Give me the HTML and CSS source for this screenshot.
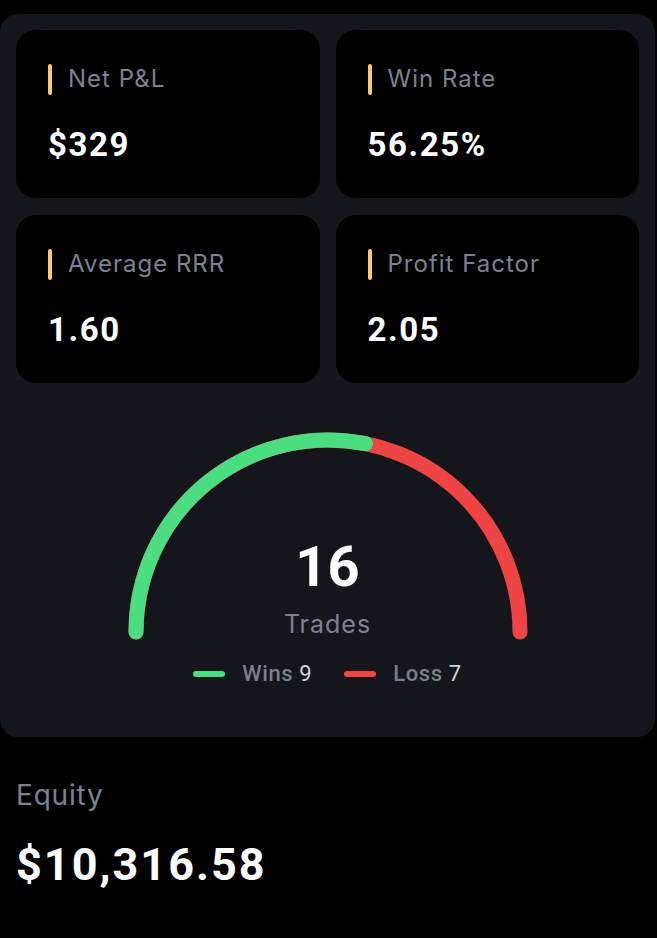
FILE: index.html
```html
<!DOCTYPE html>
<html lang="en">
<head>
    <meta charset="UTF-8">
    <meta name="viewport" content="width=device-width, initial-scale=1.0">
    <title>Trading Stats</title>
    <link rel="stylesheet" href="styles.css">
</head>
<body>
    <section class="panel">
        <div class="stats">
            <div class="stat-card">
                <div class="stat-label">Net P&amp;L</div>
                <div class="stat-value">$329</div>
            </div>
            <div class="stat-card">
                <div class="stat-label">Win Rate</div>
                <div class="stat-value">56.25%</div>
            </div>
            <div class="stat-card">
                <div class="stat-label">Average RRR</div>
                <div class="stat-value">1.60</div>
            </div>
            <div class="stat-card">
                <div class="stat-label">Profit Factor</div>
                <div class="stat-value">2.05</div>
            </div>
        </div>

        <div class="gauge">
            <svg class="gauge-arc" width="400" height="210" viewBox="0 0 400 210">
                <!-- loss arc first, wins drawn on top -->
                <path d="M 8 200 A 192 192 0 0 1 392 200" fill="none" stroke="#ef4444" stroke-width="15" stroke-linecap="round"/>
                <path d="M 8 200 A 192 192 0 0 1 237.5 11.7" fill="none" stroke="#4ade80" stroke-width="15" stroke-linecap="round"/>
            </svg>
            <div class="gauge-center">
                <div class="gauge-total">16</div>
                <div class="gauge-caption">Trades</div>
            </div>
        </div>

        <div class="legend">
            <span class="legend-item"><span class="legend-line win"></span>Wins <b>9</b></span>
            <span class="legend-item"><span class="legend-line loss"></span>Loss <b>7</b></span>
        </div>
    </section>

    <section class="equity">
        <div class="equity-label">Equity</div>
        <div class="equity-value">$10,316.58</div>
    </section>
</body>
</html>
```

FILE: styles.css
```css
body {
    margin: 0;
    background: #000;
    color: #fff;
    font-family: Inter, Lato, "Liberation Sans", sans-serif;
}
.panel {
    margin: 14px 2px 0 0;
    padding: 16px 16px 0;
    height: 723px;
    box-sizing: border-box;
    background: #15161b;
    border-radius: 18px;
}
.stats {
    display: grid;
    grid-template-columns: 1fr 1fr;
    gap: 17px 16px;
}
.stat-card {
    background: #000;
    border-radius: 20px;
    padding: 33px 20px 33px 32px;
}
.stat-label {
    display: flex;
    align-items: center;
    gap: 16px;
    font-size: 24px;
    line-height: 32px;
    letter-spacing: 1px;
    color: #7d8293;
}
.stat-label::before {
    content: "";
    width: 4px;
    height: 31px;
    border-radius: 2px;
    background: #fcc96b;
}
.stat-value {
    margin-top: 30px;
    font-family: Roboto, "Liberation Sans", sans-serif;
    font-weight: 700;
    font-size: 33px;
    line-height: 40px;
    letter-spacing: 1.6px;
}
.gauge {
    position: relative;
    width: 400px;
    height: 210px;
    margin: 49px auto 0;
}
.gauge-arc {
    display: block;
}
.gauge-center {
    position: absolute;
    left: 0;
    right: 0;
    top: 103px;
    text-align: center;
}
.gauge-total {
    font-family: Roboto, "Liberation Sans", sans-serif;
    font-weight: 700;
    font-size: 56px;
    line-height: 64px;
}
.gauge-caption {
    margin-top: 9px;
    font-size: 25px;
    line-height: 32px;
    letter-spacing: 1px;
    color: #7d8293;
}
.legend {
    display: flex;
    justify-content: center;
    gap: 32px;
    margin-top: 18px;
    font-family: Roboto, "Liberation Sans", sans-serif;
    font-weight: 500;
    font-size: 22px;
    line-height: 28px;
    letter-spacing: 0.6px;
    color: #7a7f8d;
}
.legend-item {
    display: flex;
    align-items: center;
    white-space: pre;
}
.legend-item b {
    font-weight: 400;
    color: #d4d4d8;
}
.legend-line {
    width: 32px;
    height: 6px;
    border-radius: 3px;
    margin-right: 17px;
}
.legend-line.win {
    background: #4ade80;
}
.legend-line.loss {
    background: #ef4444;
}
.equity {
    padding: 40px 16px 0;
}
.equity-label {
    font-size: 28px;
    line-height: 36px;
    letter-spacing: 0.8px;
    color: #7d8293;
}
.equity-value {
    margin-top: 26px;
    font-family: Roboto, "Liberation Sans", sans-serif;
    font-weight: 700;
    font-size: 45px;
    line-height: 52px;
    letter-spacing: 2px;
}
```
